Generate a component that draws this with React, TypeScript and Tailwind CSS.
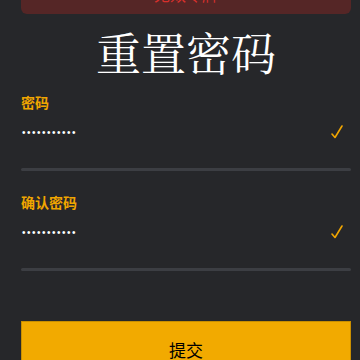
export default function App() {
  const fields = ["密码", "确认密码"];
  return (
    <div className="min-h-[360px] w-[360px] overflow-hidden bg-[#26272a] font-['Noto_Sans_CJK_SC',sans-serif]">
      <div className="ml-[21px] w-[330px]">
        {/* error banner, scrolled partly out of view */}
        <div className="-mt-[30px] rounded-b-md rounded-t-md bg-[#552626] pb-2 pt-3 text-center text-[16px] leading-6 text-[#d9302c]">
          无效令牌
        </div>

        <h1 className="mt-[12px] text-center font-['Noto_Serif_CJK_SC','Noto_Sans_CJK_SC',serif] text-[45px] font-normal leading-[52px] text-white">
          重置密码
        </h1>

        <div className="mt-[14px]">
          {fields.map((label, i) => (
            <div key={label} className={i > 0 ? "mt-[21px]" : ""}>
              <div className="text-[14px] font-bold leading-5 text-[#f0a500]">{label}</div>
              <div className="flex h-[40px] items-center justify-between pr-2">
                <span className="pl-px font-['Liberation_Sans',sans-serif] text-[10px] tracking-[1.5px] text-white">
                  •••••••••••
                </span>
                <svg width="12" height="14" viewBox="0 0 12 14" fill="none">
                  <path d="M1 9 L4 12.5 L11 1" stroke="#f0a500" strokeWidth="1.6" strokeLinecap="round" strokeLinejoin="round" />
                </svg>
              </div>
              <div className="mt-[16px] h-[3px] rounded-full bg-[#3c3e43]" />
            </div>
          ))}
        </div>

        <button className="mt-[50px] flex h-[60px] w-full justify-center border border-[#c98e00] bg-[#f2aa00] pt-[16px] text-[17px] leading-6 text-black">
          提交
        </button>
      </div>
    </div>
  );
}
